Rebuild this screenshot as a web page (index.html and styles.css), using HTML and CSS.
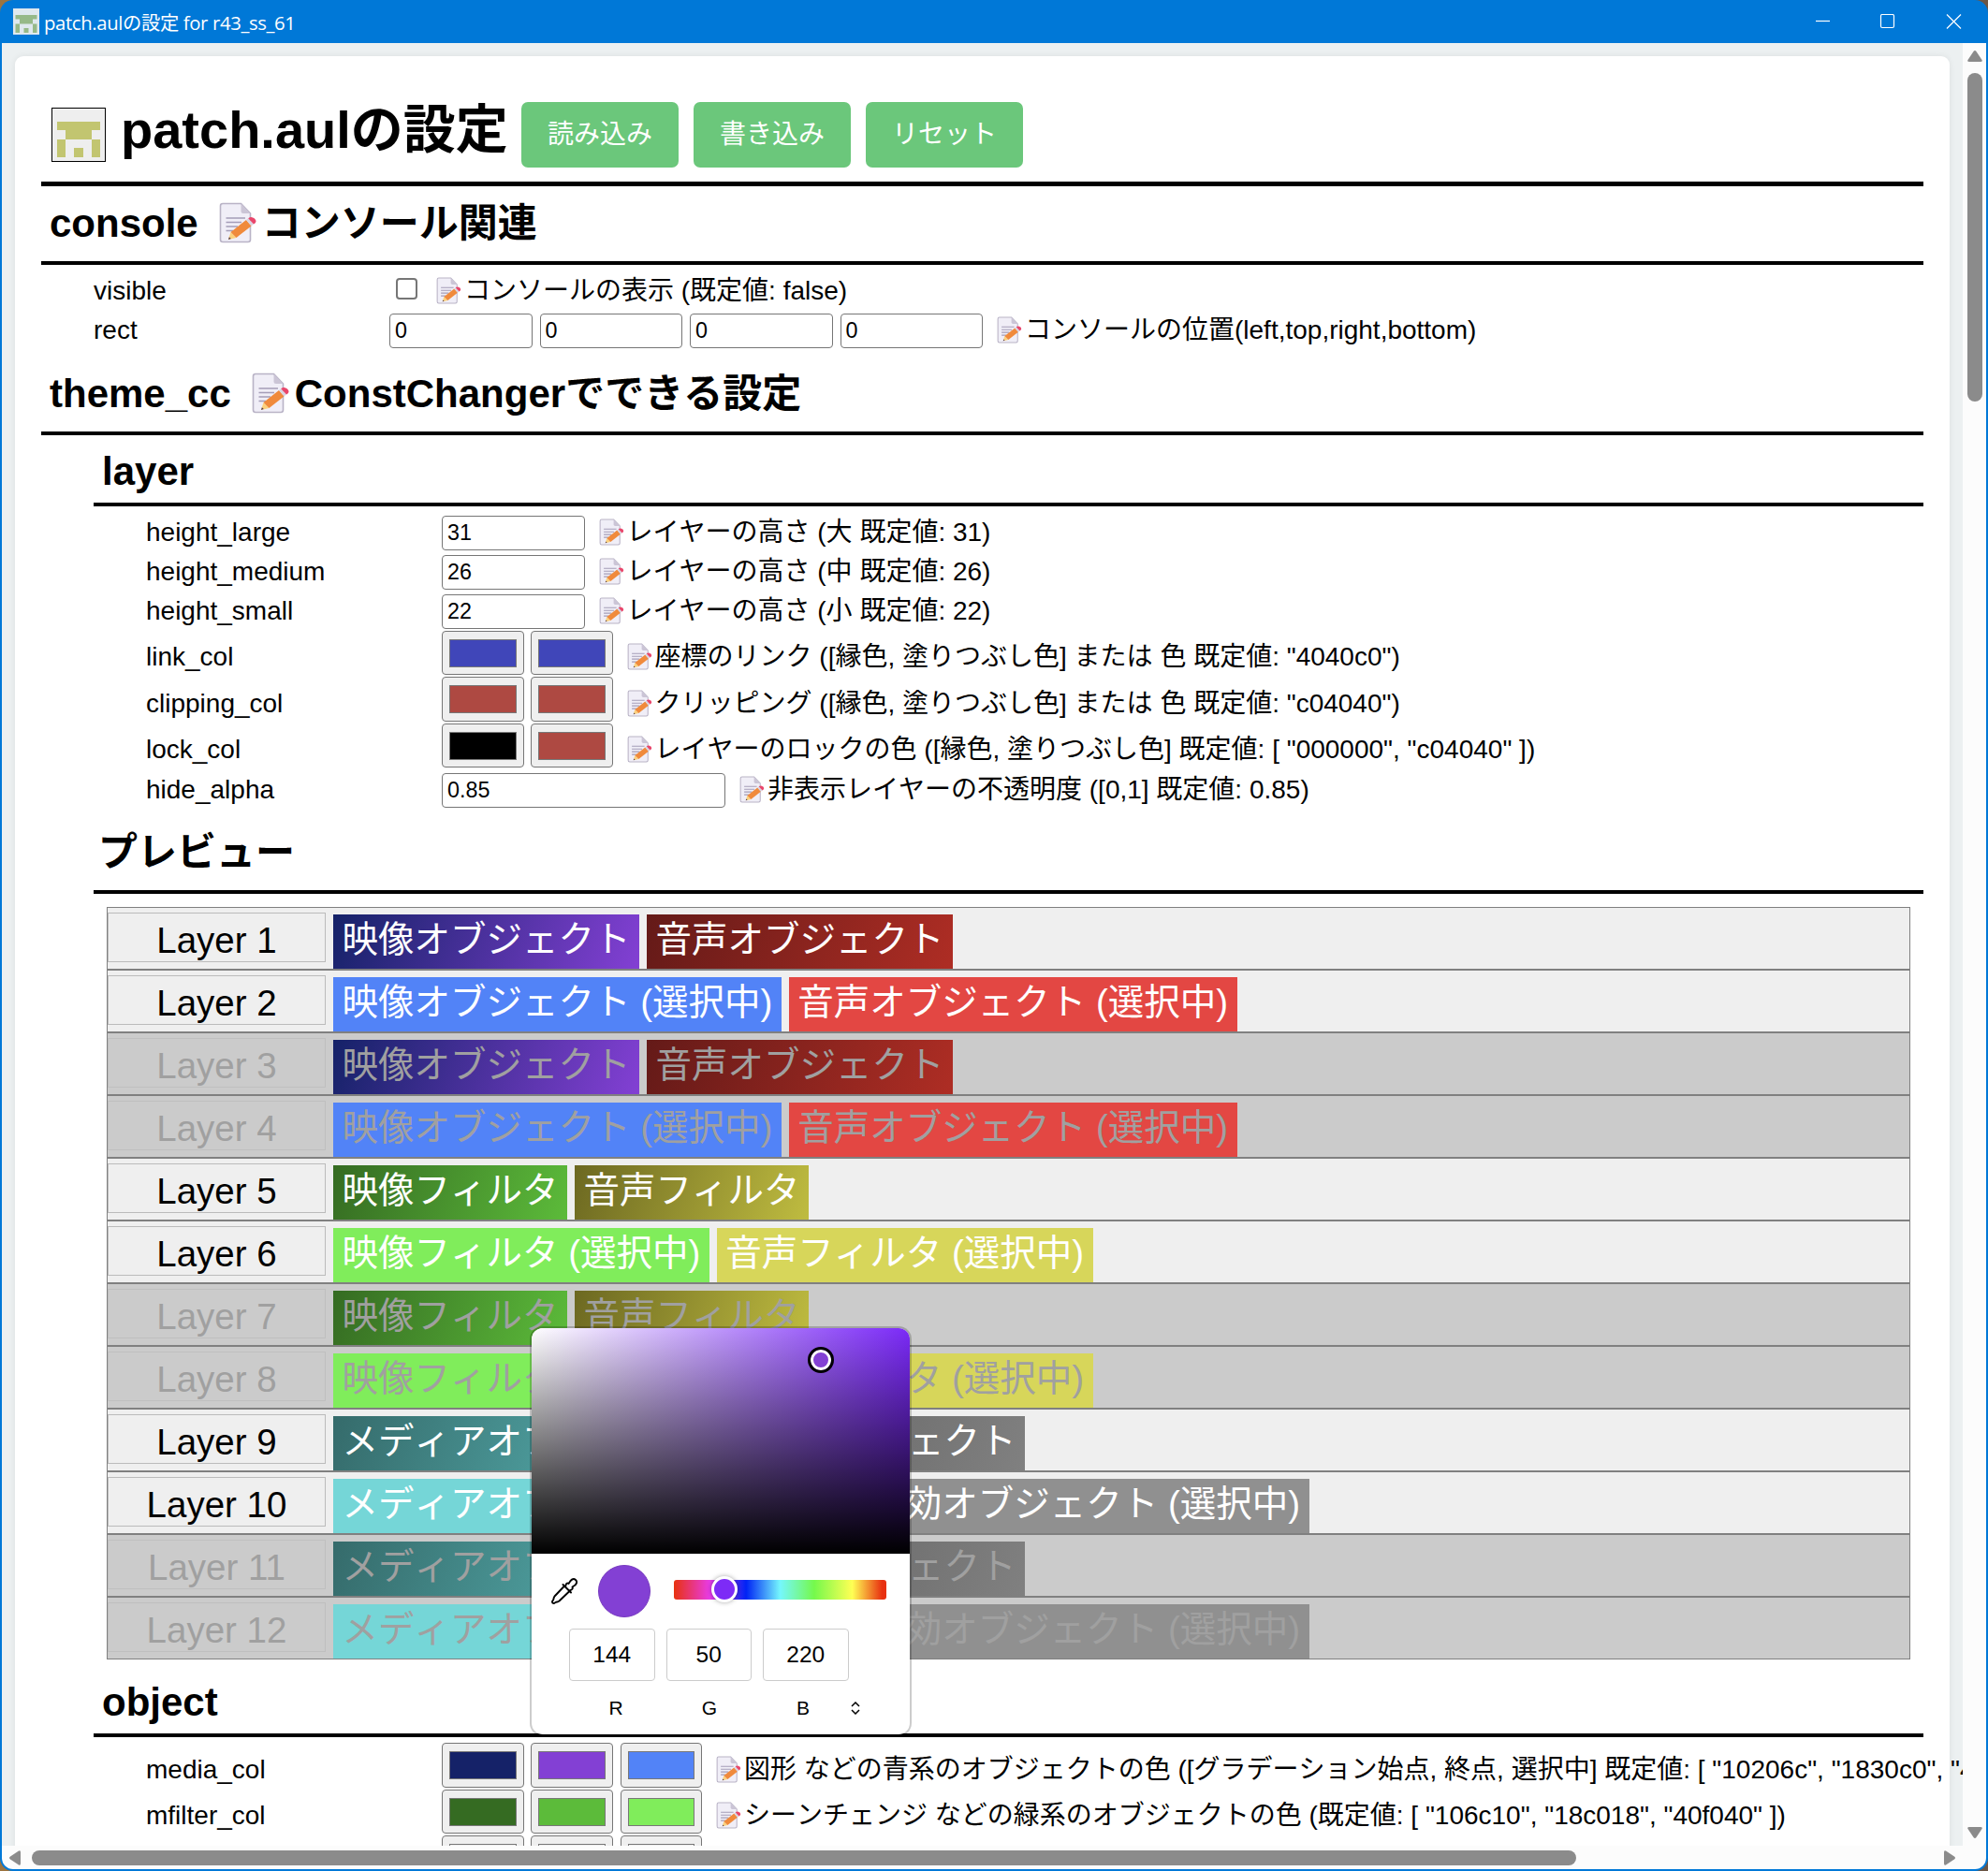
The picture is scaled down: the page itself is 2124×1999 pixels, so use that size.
FILE: index.html
```html
<!DOCTYPE html>
<html lang="ja">
<head>
<meta charset="utf-8">
<title>patch.aulの設定 for r43_ss_61</title>
<link rel="stylesheet" href="styles.css">
</head>
<body>
<svg class="defs" width="0" height="0" aria-hidden="true">
  <symbol id="memo" viewBox="0 0 42 44">
    <path d="M4 1.500H23.500L33.500 12V40Q33.500 42.500 31 42.500H4Q1.500 42.500 1.500 40V4Q1.500 1.500 4 1.500Z" fill="#f0eef7" stroke="#b9b3c6" stroke-width="1.600"/>
    <path d="M23.500 1.500V9.500Q23.500 12 26 12H33.500Z" fill="#cbc5d6"/>
    <path d="M7.500 17H28M7.500 21.500H24M7.500 26H20M7.500 30.500H15" stroke="#a49db8" stroke-width="1.600"/>
    <path d="M10 40L12.500 32L18.500 38Z" fill="#fcd17c"/>
    <path d="M10 40L10.900 37.200L12.800 39.100Z" fill="#50394a"/>
    <path d="M12.500 32L29 19L34.500 25.500L18.500 38Z" fill="#f08a3c"/>
    <path d="M29 19L31.200 17.200L37 23.500L34.500 25.500Z" fill="#d9d5e2"/>
    <path d="M31.200 17.200Q34.500 14.500 38 17.500Q41.500 21 37 23.500Z" fill="#e9466b"/>
  </symbol>
  <symbol id="face" viewBox="0 0 56 56">
    <path d="M5 14H51V23H42V33H14V23H5ZM5 33H14V52H5ZM42 33H51V52H42ZM23 42H33V52H23Z"/>
  </symbol>
</svg>
<div class="window">
  <header class="titlebar">
    <svg class="app-icon"><rect width="28" height="28" fill="#dfe8ee"/><use href="#face" width="28" height="28" fill="#96b988"/></svg>
    <span class="caption">patch.aulの設定 for r43_ss_61</span>
    <svg class="caption-buttons" viewBox="0 0 160 16" fill="none" stroke="#fff" stroke-width="1.200">
      <path d="M1 7.500H16"/><rect x="70.500" y=".5" width="14" height="14" rx="1.500"/><path d="M141 .5L156 15.500M156 .5L141 15.500"/>
    </svg>
  </header>
  <div class="body">
    <main class="page">
      <div class="card">
        <h1><svg class="logo"><use href="#face" width="56" height="56"/></svg><span class="h1-text">patch.aulの設定</span>
          <button>読み込み</button><button>書き込み</button><button>リセット</button></h1>
        <h2 class="h-console"><span>console</span><svg class="memo"><use href="#memo"/></svg><span>コンソール関連</span></h2>
        <div class="rows">
          <div class="row"><label>visible</label><i class="check"></i><svg class="memo"><use href="#memo"/></svg><span>コンソールの表示 (既定値: false)</span></div>
          <div class="row"><label>rect</label><b class="num">0</b><b class="num">0</b><b class="num">0</b><b class="num">0</b><svg class="memo"><use href="#memo"/></svg><span>コンソールの位置(left,top,right,bottom)</span></div>
        </div>
        <h2 class="h-theme"><span>theme_cc</span><svg class="memo"><use href="#memo"/></svg><span>ConstChangerでできる設定</span></h2>
        <section>
          <h2 class="h-layer">layer</h2>
          <div class="rows">
            <div class="row"><label>height_large</label><b class="num">31</b><svg class="memo"><use href="#memo"/></svg><span>レイヤーの高さ (大 既定値: 31)</span></div>
            <div class="row"><label>height_medium</label><b class="num">26</b><svg class="memo"><use href="#memo"/></svg><span>レイヤーの高さ (中 既定値: 26)</span></div>
            <div class="row"><label>height_small</label><b class="num">22</b><svg class="memo"><use href="#memo"/></svg><span>レイヤーの高さ (小 既定値: 22)</span></div>
            <div class="row tall"><label>link_col</label><b class="col c-blue"></b><b class="col c-blue"></b><svg class="memo"><use href="#memo"/></svg><span>座標のリンク ([縁色, 塗りつぶし色] または 色 既定値: "4040c0")</span></div>
            <div class="row tall"><label>clipping_col</label><b class="col c-red"></b><b class="col c-red"></b><svg class="memo"><use href="#memo"/></svg><span>クリッピング ([縁色, 塗りつぶし色] または 色 既定値: "c04040")</span></div>
            <div class="row tall"><label>lock_col</label><b class="col c-black"></b><b class="col c-red"></b><svg class="memo"><use href="#memo"/></svg><span>レイヤーのロックの色 ([縁色, 塗りつぶし色] 既定値: [ "000000", "c04040" ])</span></div>
            <div class="row"><label>hide_alpha</label><b class="num wide">0.85</b><svg class="memo"><use href="#memo"/></svg><span>非表示レイヤーの不透明度 ([0,1] 既定値: 0.85)</span></div>
          </div>
          <h2 class="h-preview">プレビュー</h2>
          <div class="timeline">
            <div class="layer"><span class="name">Layer 1</span><span class="obj g-media">映像オブジェクト</span><span class="obj g-audio">音声オブジェクト</span></div>
            <div class="layer"><span class="name">Layer 2</span><span class="obj s-media">映像オブジェクト (選択中)</span><span class="obj s-audio">音声オブジェクト (選択中)</span></div>
            <div class="layer off"><span class="name">Layer 3</span><span class="obj g-media">映像オブジェクト</span><span class="obj g-audio">音声オブジェクト</span></div>
            <div class="layer off"><span class="name">Layer 4</span><span class="obj s-media">映像オブジェクト (選択中)</span><span class="obj s-audio">音声オブジェクト (選択中)</span></div>
            <div class="layer"><span class="name">Layer 5</span><span class="obj g-mfilter">映像フィルタ</span><span class="obj g-afilter">音声フィルタ</span></div>
            <div class="layer"><span class="name">Layer 6</span><span class="obj s-mfilter">映像フィルタ (選択中)</span><span class="obj s-afilter">音声フィルタ (選択中)</span></div>
            <div class="layer off"><span class="name">Layer 7</span><span class="obj g-mfilter">映像フィルタ</span><span class="obj g-afilter">音声フィルタ</span></div>
            <div class="layer off"><span class="name">Layer 8</span><span class="obj s-mfilter">映像フィルタ (選択中)</span><span class="obj s-afilter">音声フィルタ (選択中)</span></div>
            <div class="layer"><span class="name">Layer 9</span><span class="obj g-control">メディアオブジェクト</span><span class="obj g-inactive">無効オブジェクト</span></div>
            <div class="layer"><span class="name">Layer 10</span><span class="obj s-control">メディアオブジェクト (選択中)</span><span class="obj s-inactive">無効オブジェクト (選択中)</span></div>
            <div class="layer off"><span class="name">Layer 11</span><span class="obj g-control">メディアオブジェクト</span><span class="obj g-inactive">無効オブジェクト</span></div>
            <div class="layer off"><span class="name">Layer 12</span><span class="obj s-control">メディアオブジェクト (選択中)</span><span class="obj s-inactive">無効オブジェクト (選択中)</span></div>
          </div>
          <h2 class="h-object">object</h2>
          <div class="rows">
            <div class="row tall"><label>media_col</label><b class="col c-navy"></b><b class="col c-violet"></b><b class="col c-sky"></b><svg class="memo"><use href="#memo"/></svg><span>図形 などの青系のオブジェクトの色 ([グラデーション始点, 終点, 選択中] 既定値: [ "10206c", "1830c0", "4080ff" ])</span></div>
            <div class="row tall"><label>mfilter_col</label><b class="col c-forest"></b><b class="col c-green"></b><b class="col c-lime"></b><svg class="memo"><use href="#memo"/></svg><span>シーンチェンジ などの緑系のオブジェクトの色 (既定値: [ "106c10", "18c018", "40f040" ])</span></div>
            <div class="row tall"><label></label><b class="col"></b><b class="col"></b><b class="col"></b></div>
          </div>
        </section>
      </div>
    </main>
    <div class="vbar"><svg viewBox="0 0 16 12"><path d="M2 12Q-.5 12 .5 10L6.500 1Q8 -1 9.500 1L15.500 10Q16.500 12 14 12Z"/></svg><i class="thumb"></i><svg viewBox="0 0 16 12"><path d="M2 0Q-.5 0 .5 2L6.500 11Q8 13 9.500 11L15.500 2Q16.500 0 14 0Z"/></svg></div>
    <div class="hbar"><svg viewBox="0 0 12 16"><path d="M12 2Q12 -.5 10 .5L1 6.500Q-1 8 1 9.500L10 15.500Q12 16.500 12 14Z"/></svg><i class="thumb"></i><svg viewBox="0 0 12 16"><path d="M0 2Q0 -.5 2 .5L11 6.500Q13 8 11 9.500L2 15.500Q0 16.500 0 14Z"/></svg></div>
  </div>
  <div class="picker">
    <div class="well"><i class="well-handle"></i></div>
    <div class="tools">
      <svg class="dropper" viewBox="0 0 28 28" fill="none" stroke="#000" stroke-width="1.900" stroke-linejoin="round" stroke-linecap="round"><path d="M14 8.500L3.500 19.500Q2.500 21 2.300 23L1 25Q.8 27 3 27L5 25.800Q7 25.500 8.500 24.500L19.500 14M12.500 7L21 15.500M15.500 8Q16 4.500 18.500 6L20.500 3Q23.500 -.2 26 2Q28.500 4.500 25.500 7.500L22.500 9.500Q23.500 12 20.500 13"/></svg>
      <i class="current"></i>
      <div class="hue"><i class="hue-handle"></i></div>
    </div>
    <div class="fields"><b>144</b><b>50</b><b>220</b></div>
    <div class="labels"><span>R</span><span>G</span><span>B</span><svg viewBox="0 0 10 14" fill="none" stroke="#000" stroke-width="1.500"><path d="M1 5L5 1L9 5M1 9L5 13L9 9"/></svg></div>
  </div>
</div>
</body>
</html>
```
FILE: styles.css
```css
* { box-sizing: border-box; }
html, body { margin: 0; height: 100%; overflow: hidden; }
body {
  background: linear-gradient(90deg, #9c7440, #6b5646);
  font: 28px/42px "Liberation Sans", "Noto Sans CJK JP", sans-serif;
  font-kerning: none;
  color: #000;
}
.defs { position: absolute; }
svg { display: block; flex: none; }
.window {
  position: relative;
  width: 2124px; height: 1999px;
  background: #0078d7;
  border-radius: 14px;
  overflow: hidden;
}
.titlebar { height: 46px; padding: 0 28px 0 14px; display: flex; align-items: center; }
.app-icon { width: 28px; height: 28px; }
.caption { margin-left: 5px; color: #fff; font: 20.300px/46px "Open Sans", "Noto Sans CJK JP", sans-serif; font-kerning: auto; padding-top: 2px; letter-spacing: -.35px; white-space: nowrap; }
.caption-buttons { width: 160px; height: 16px; margin-left: auto; margin-right: -3px; }

.body {
  margin: 0 2px; height: 1951px;
  display: grid;
  grid-template: 1926px 25px / 2095px 25px;
  background: #fcfcfc;
  border-radius: 0 0 12px 12px;
  overflow: hidden;
}
.page { background: #ecf0f1; padding: 14px 14px 0; overflow: hidden; }
.card {
  height: 2200px;
  padding: 49px 28px 0;
  background: #fff;
  border-radius: 9px;
  box-shadow: 0 0 7px rgba(0, 0, 0, .07);
  white-space: nowrap;
}
h1, h2 { margin: 0; font-weight: bold; display: flex; }
h1 { height: 90px; border-bottom: 5px solid #000; padding-left: 11px; font-size: 56px; line-height: 84px; }
.logo { width: 58px; height: 58px; margin-top: 6px; border: 1.500px solid #000; background: #eee; fill: #c2c570; }
.h1-text { margin: -12px 17px 0 16px; width: 411px; }
button {
  width: 168px; height: 70px; margin-right: 16px; padding: 0;
  border: 0; border-radius: 7px; background: #6bc77b; color: #fff;
  font: 28px/66px "Liberation Sans", "Noto Sans CJK JP", sans-serif;
}
h2 { border-bottom: 4px solid #000; padding-left: 9px; font-size: 42px; line-height: 62px; }
h2 .memo { width: 42px; height: 44px; margin: 8px 4px 0 22px; }
.h-console { height: 84px; padding-top: 9px; }
.h-theme { height: 90px; padding-top: 15px; }
section { margin-left: 56px; }
.h-layer { height: 76px; padding-top: 8px; }
.h-preview { height: 89px; padding-top: 14px; padding-left: 5px; }
.h-object { height: 83px; padding-top: 15px; }

.rows { padding: 8px 0 0 56px; }
.row { height: 42px; display: flex; align-items: flex-start; line-height: 40px; }
.row > * { flex: none; }
.row.tall { height: 49.500px; line-height: 54px; }
.row label { width: 316px; }
.row .memo { width: 28px; height: 29px; margin: 5px 2px 0 7px; }
.row.tall .memo { margin-top: 12px; }
.check { width: 23px; height: 23px; margin: 6px 13px 0 7px; border: 2px solid #767676; border-radius: 4px; }
.num {
  width: 152.500px; height: 37px; margin: 2px 8px 0 0; padding-left: 5px;
  border: 1.500px solid #767676; border-radius: 4px;
  font: 23.330px/35px "Liberation Sans", sans-serif;
}
.wide { width: 303px; }
.col { width: 87.500px; height: 47.500px; margin: -1.500px 7.800px 0 0; padding: 8px 7px; border: 1.500px solid #767676; border-radius: 4px; background: #efefef; }
.col::before { content: ""; display: block; height: 28px; border: 1px solid #777; background: var(--c); }
.c-blue { --c: #4046b9; } .c-red { --c: #ae4942; } .c-black { --c: #000; }
.c-navy { --c: #152268; } .c-violet { --c: #8340d4; } .c-sky { --c: #5283f7; }
.c-forest { --c: #356b22; } .c-green { --c: #5cbb3a; } .c-lime { --c: #80ed5b; }

.timeline { margin: 14px 14px 0; }
.layer { height: 67px; border: 1px solid #808080; background: #efefef; display: flex; align-items: flex-start; font-size: 38.500px; color: #fff; }
.name { width: 233px; height: 53px; margin: 5px 8px 0 0; border: 1px solid #bbb; color: #000; text-align: center; line-height: 57px; font-kerning: normal; }
.obj { height: 58px; margin: 7px 8px 0 0; padding: 0 9.500px; line-height: 54px; }
.off { background: #cbcbcb; color: #a0a0a0; }
.off .name { color: #a0a0a0; border-color: #bfbfbf; }
.g-media { background: linear-gradient(110deg, #152268, #8340d4); }
.g-audio { background: linear-gradient(110deg, #641a18, #ae2d24); }
.s-media { background: #5283f7; }
.s-audio { background: #e34743; }
.g-mfilter { background: linear-gradient(110deg, #356b22, #5cbb3a); }
.g-afilter { background: linear-gradient(110deg, #6c6821, #bfbc40); }
.s-mfilter { background: #80ed5b; }
.s-afilter { background: #d7d65a; }
.g-control { background: linear-gradient(110deg, #356b6b, #5cbbbb); }
.s-control { background: #75d6d7; }
.g-inactive { background: linear-gradient(110deg, #606060, #808080); }
.s-inactive { background: #909090; }
.off .g-inactive, .off .s-inactive { color: #a0a0a0; }

.vbar { padding: 8px 0; display: flex; flex-direction: column; align-items: center; }
.vbar svg { width: 16px; height: 12px; fill: #8b8b8b; }
.vbar .thumb { width: 16px; height: 351px; margin: 12px 0 auto; border-radius: 8px; background: #8b8b8b; }
.hbar { grid-column: 1 / 3; padding: 0 33px 0 8px; display: flex; align-items: center; }
.hbar svg { width: 12px; height: 16px; fill: #8b8b8b; }
.hbar .thumb { width: 1650px; height: 16px; margin: 0 auto 0 12px; border-radius: 8px; background: #8b8b8b; }

.picker {
  position: absolute; left: 566px; top: 1417px; width: 408px; height: 438px;
  border: 2px solid rgba(0, 0, 0, .2); border-radius: 14px;
  background: #fff; background-clip: padding-box; overflow: hidden;
}
.well { position: relative; height: 241px; background: linear-gradient(transparent, #000), linear-gradient(90deg, #fff, #7b2af8); }
.well-handle { position: absolute; left: 294.500px; top: 19.500px; width: 28px; height: 28px; border: 3.500px solid #000; border-radius: 50%; background: #8340d4; box-shadow: inset 0 0 0 3px #fff; }
.tools { height: 80px; display: flex; align-items: center; padding-left: 21px; }
.dropper { width: 28px; height: 28px; }
.current { width: 56px; height: 56px; margin: 0 25px 0 22px; border-radius: 50%; background: #8340d4; border: 1px solid #773abf; }
.hue { position: relative; width: 227px; height: 21px; margin-top: -3px; border-radius: 3px; background: linear-gradient(90deg, #e8320f, #e83be8 17%, #0023f5 34%, #75f7fd 50%, #75f94c 66%, #ffff54 84%, #e83010 98%); }
.hue-handle { position: absolute; left: 40px; top: -4px; width: 28px; height: 28px; border: 3px solid #fff; border-radius: 50%; background: #7d2bf6; box-shadow: 0 0 5px rgba(0, 0, 0, .35); }
.fields { display: flex; gap: 12px; padding-left: 40px; }
.fields b { width: 91.500px; height: 56px; border: 1px solid #ccc; border-radius: 4px; text-align: center; font: 24.500px/54px "Liberation Sans", sans-serif; }
.labels { display: flex; align-items: center; padding: 13px 0 0 40px; font-size: 21px; line-height: 32px; }
.labels span { width: 100px; text-align: center; }
.labels svg { width: 10px; height: 14px; margin-left: 1px; }
```
